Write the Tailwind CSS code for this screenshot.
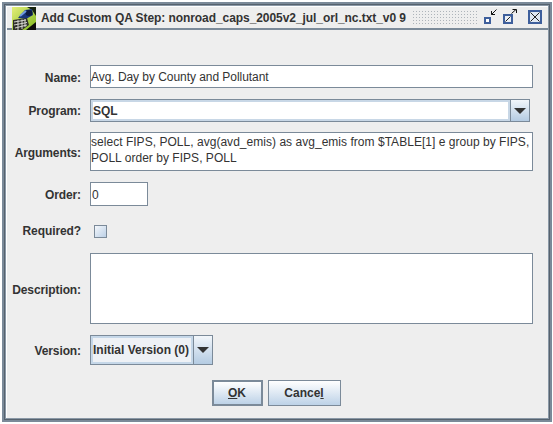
<!DOCTYPE html>
<html lang="en">
<head>
  <meta charset="UTF-8" />
  <title>Add Custom QA Step</title>
  <script src="https://cdn.jsdelivr.net/npm/@tailwindcss/browser@4"></script>
</head>
<body class="bg-white font-['Liberation_Sans',Arial,sans-serif] text-[12px] text-[#333333]">
  <div class="w-[553px] h-[424px] pt-[2px] pl-[2px]">
    <!-- window frame -->
    <div class="w-[550px] h-[420px] bg-[#7b8a99] p-[2px]">
      <div class="h-full border border-[#56626e] bg-[#8a98a6] p-px">
        <div class="h-full w-full bg-[#eeeeee] flex flex-col border-l border-t border-white">

          <!-- title bar -->
          <div class="h-[23px] flex shrink-0 border-b-2 border-[#7b8a99] pl-[5px]">
            <svg width="24" height="23" viewBox="0 0 24 23" class="shrink-0">
              <defs>
                <linearGradient id="g" x1="0" y1="0" x2="1" y2="1">
                  <stop offset="0" stop-color="#e4ee7a"/>
                  <stop offset="1" stop-color="#7fb81e"/>
                </linearGradient>
              </defs>
              <rect width="24" height="23" fill="url(#g)"/>
              <path d="M15 0H24V9L20 3Z" fill="#16220e"/>
              <path d="M14 23L24 15V23Z" fill="#0c0c0c"/>
              <path d="M6 11L13 3L20 2L21 8L14 12Z" fill="#17347c"/>
              <ellipse cx="17" cy="6" rx="3.5" ry="3" fill="#0d1a40"/>
              <path d="M8 9L14 4" stroke="#6f9ae0" stroke-width="2"/>
              <path d="M1 13L15 11L17 18L10 23H1Z" fill="#30302c"/>
              <path d="M2 15L14 13M2 18L15 15.5M3 21L15 18M6 13V23M10 12.5V22M13 12V20" stroke="#d6d6d0" stroke-width="1"/>
            </svg>
            <span class="ml-[5px] font-bold leading-[22px] tracking-[-0.07px] whitespace-nowrap">Add Custom QA Step: nonroad_caps_2005v2_jul_orl_nc.txt_v0 9</span>
            <div class="ml-[6px] mt-[3px] w-[66px] h-[15px] bg-[radial-gradient(#aeb4ba_0.8px,transparent_0.9px)] bg-[length:3px_3px]"></div>
            <svg width="68" height="21" viewBox="0 0 68 21" class="shrink-0">
              <rect x="7" y="11" width="5" height="5" fill="#fff" stroke="#3e5f9c" stroke-width="2"/>
              <path d="M13.5 7.5L18.5 2.5M13.5 7.5H17M13.5 7.5V4" stroke="#111" fill="none"/>
              <rect x="26" y="8" width="8" height="8" fill="#e8eef6" stroke="#3e5f9c" stroke-width="2"/>
              <path d="M27.5 14.5L32.5 9.5" stroke="#222"/>
              <path d="M33.5 6.5L38 2.5M34.5 2.5H38.5V6" stroke="#111" fill="none"/>
              <rect x="51" y="4" width="12" height="12" fill="#dfe8f2" stroke="#3e5f9c" stroke-width="2"/>
              <path d="M52.5 5.5L61.5 14.5M61.5 5.5L52.5 14.5" stroke="#222" fill="none"/>
            </svg>
          </div>

          <!-- form -->
          <div class="flex-1 grid grid-cols-[74px_1fr] gap-x-[9px] content-start items-center pt-[35px] pr-[15px] font-bold">
            <label class="text-right tracking-[-0.1px] pt-[2px] leading-[20px]">Name:</label>
            <div class="h-[23px] border border-[#7b8a99] bg-white font-normal leading-[22px] tracking-[-0.05px]">Avg. Day by County and Pollutant</div>

            <label class="text-right tracking-[-0.1px] mt-[11px]">Program:</label>
            <div class="mt-[11px] w-[440px] h-[23px] border border-[#7b8a99] flex bg-white">
              <div class="flex-1 leading-[19px] border-2 border-[#a3bdd6]/60">SQL</div>
              <div class="w-[19px] border-l border-[#7b8a99] bg-gradient-to-b from-[#f2f6fa] to-[#b4cbe2] flex items-center justify-center">
                <span class="w-0 h-0 border-l-[6px] border-r-[6px] border-t-[6px] border-l-transparent border-r-transparent border-t-[#333333]"></span>
              </div>
            </div>

            <label class="text-right tracking-[-0.1px] mt-[10px] pt-[2px] leading-[20px]">Arguments:</label>
            <div class="mt-[10px] h-[39px] border border-[#7b8a99] bg-white font-normal leading-[16px] pt-[1px] tracking-[0.03px] whitespace-nowrap overflow-hidden">select FIPS, POLL, avg(avd_emis) as avg_emis from $TABLE[1] e group by FIPS,<br>POLL order by FIPS, POLL</div>

            <label class="text-right tracking-[-0.1px] mt-[11px] pt-[2px] leading-[20px]">Order:</label>
            <div class="mt-[11px] w-[58px] h-[24px] border border-[#7b8a99] bg-white pl-[1px] font-normal leading-[24px]">0</div>

            <label class="text-right tracking-[-0.1px] mt-[16px]">Required?</label>
            <div class="mt-[16px] ml-[4px] w-[13px] h-[13px] border border-[#7b8a99] bg-gradient-to-br from-[#f4f7fb] to-[#bcd0e6]"></div>

            <label class="text-right tracking-[-0.1px] mt-[13px] pt-[2px] leading-[20px]">Description:</label>
            <div class="mt-[13px] h-[71px] border border-[#7b8a99] bg-white"></div>

            <label class="text-right tracking-[-0.1px] mt-[11px] pt-[2px] leading-[20px]">Version:</label>
            <div class="mt-[11px] w-[123px] h-[30px] border border-[#7b8a99] flex">
              <div class="flex-1 leading-[25px] border-2 border-[#c5d7e8] bg-[#eef1f5] whitespace-nowrap">Initial Version (0)</div>
              <div class="w-[19px] border-l border-[#7b8a99] bg-gradient-to-b from-[#f2f6fa] to-[#b4cbe2] flex items-center justify-center">
                <span class="w-0 h-0 border-l-[6px] border-r-[6px] border-t-[6px] border-l-transparent border-r-transparent border-t-[#333333]"></span>
              </div>
            </div>

            <!-- buttons -->
            <div class="col-span-2 flex justify-center gap-[5px] mt-[15px] pl-[12px]">
              <button class="w-[51px] h-[26px] border-2 border-[#7b8a99] bg-gradient-to-b from-white to-[#bdd2e7] font-bold text-[#333333]"><u>O</u>K</button>
              <button class="w-[73px] h-[26px] border border-[#7b8a99] bg-gradient-to-b from-white to-[#bdd2e7] font-bold text-[#333333]">Cance<u>l</u></button>
            </div>
          </div>
        </div>
      </div>
    </div>
  </div>
</body>
</html>
